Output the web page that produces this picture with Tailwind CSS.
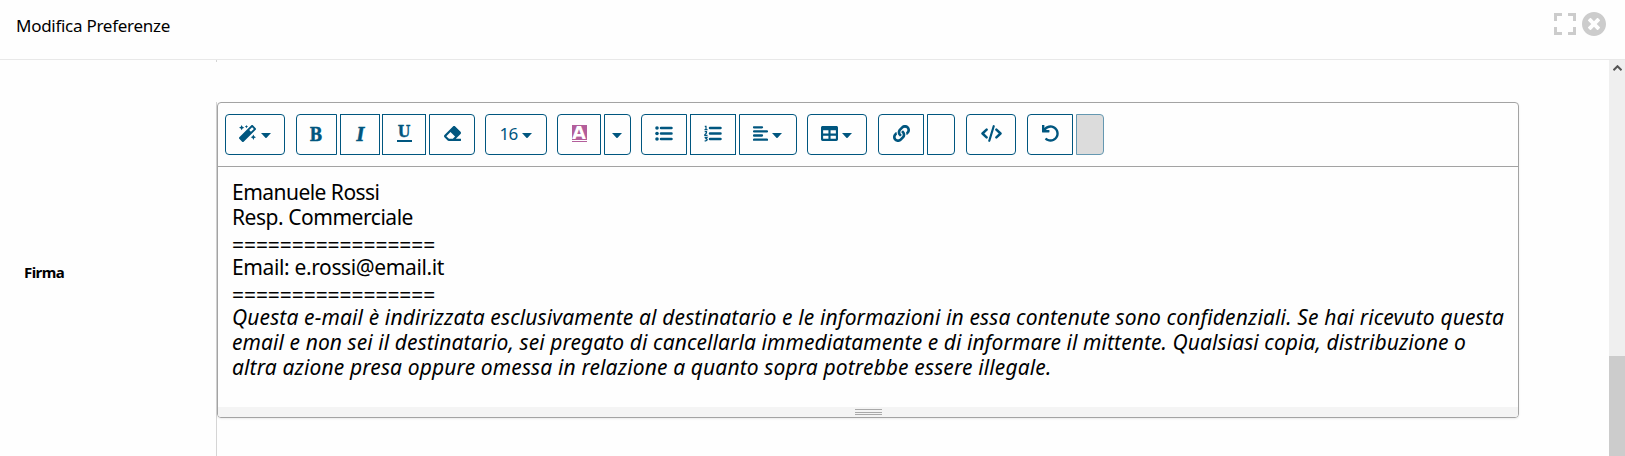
<!DOCTYPE html>
<html lang="it">
<head>
<meta charset="utf-8">
<title>Modifica Preferenze</title>
<script src="https://cdn.jsdelivr.net/npm/@tailwindcss/browser@4"></script>
</head>
<body class="flex h-[456px] w-[1625px] flex-col overflow-hidden bg-[#fefefe] font-['Noto_Sans',sans-serif] text-black">
<svg class="hidden"><symbol id="caret" viewBox="0 0 10 5"><path d="M0 0h10L5.600 4.700Q5 5.200 4.400 4.700Z" fill="currentColor"/></symbol></svg>
<header class="flex h-[60px] shrink-0 justify-between border-b border-[#e8e8e8]">
  <h1 class="pt-[14px] pl-4 text-[17px] leading-6 tracking-[-0.276px] whitespace-nowrap">Modifica Preferenze</h1>
  <div class="flex gap-[6px] pt-3 pr-[19px] text-[#ccc]">
    <svg class="mt-px h-[22px] w-[22px]" viewBox="0 0 22 22" fill="none" stroke="currentColor" stroke-width="3"><path d="M1.500 8V1.500H8M14 1.500h6.500V8M1.500 14v6.500H8M14 20.500h6.500V14"/></svg>
    <svg class="h-6 w-6" viewBox="8 8 496 496" fill="currentColor"><path d="M256 8C119 8 8 119 8 256s111 248 248 248 248-111 248-248S393 8 256 8zm121.600 313.100c4.700 4.700 4.700 12.300 0 17L338 377.600c-4.700 4.700-12.300 4.700-17 0L256 312l-65.100 65.600c-4.700 4.700-12.300 4.700-17 0L134.400 338c-4.700-4.700-4.700-12.300 0-17l65.600-65-65.600-65.100c-4.700-4.700-4.700-12.300 0-17l39.600-39.600c4.700-4.700 12.300-4.700 17 0l65 65.700 65.100-65.600c4.700-4.700 12.300-4.700 17 0l39.600 39.600c4.700 4.700 4.700 12.300 0 17L312 256l65.600 65.100z"/></svg>
  </div>
</header>
<div class="flex min-h-0 flex-1">
  <main class="flex flex-1 flex-col">
    <div class="ml-[216px] h-[2px] w-px bg-[#d5d5d5]"></div>
    <div class="mt-10 flex flex-1">
      <div class="w-[216px] shrink-0 pt-[158px] pl-6 text-[15px] leading-6 font-bold tracking-[-0.6px]">Firma</div>
      <div class="flex-1 border-l border-[#d5d5d5]">
        <section class="flex h-[316px] w-[1302px] flex-col overflow-hidden rounded-[4px] border border-[#a3a3a3] shadow-[0_1px_2px_rgba(0,0,0,0.08)]">
          <div class="flex h-16 shrink-0 border-b border-[#a3a3a3] pt-[11px] pl-[7px] text-[#00567f] *:flex *:h-[41px] *:shrink-0 *:items-center *:justify-center *:border *:border-[#00567f]">
            <button class="w-[60px] gap-[5px] rounded-[4px]"><svg class="-mt-[2px] h-[17px] w-[17px]" viewBox="0 0 512 512" fill="currentColor"><path d="M224 96l16-32 32-16-32-16-16-32-16 32-32 16 32 16 16 32zM80 160l26.660-53.330L160 80l-53.340-26.670L80 0 53.340 53.330 0 80l53.340 26.670L80 160zm352 128l-26.660 53.330L352 368l53.340 26.670L432 448l26.660-53.330L512 368l-53.340-26.670L432 288zm70.620-193.770L417.770 9.380C411.530 3.120 403.340 0 395.150 0c-8.190 0-16.380 3.120-22.630 9.380L9.380 372.520c-12.500 12.500-12.500 32.760 0 45.250l84.850 84.850c6.250 6.250 14.440 9.370 22.620 9.370 8.190 0 16.380-3.120 22.630-9.370l363.140-363.150c12.500-12.480 12.500-32.750 0-45.240zM359.450 203.460l-50.910-50.910 86.600-86.600 50.910 50.910-86.600 86.600z"/></svg><svg class="mt-px h-[5px] w-[10px]"><use href="#caret"/></svg></button>
            <button class="ml-[11px] w-[41px] rounded-l-[4px]"><span class="-mt-px inline-block scale-x-[0.8] font-['DejaVu_Serif',serif] text-[19px] leading-5 font-bold [-webkit-text-stroke:0.5px_#00567f]">B</span></button>
            <button class="ml-[3px] w-10"><span class="-mt-px inline-block scale-x-[0.9] font-['DejaVu_Serif',serif] text-[19px] leading-5 font-bold italic [-webkit-text-stroke:0.4px_#00567f]">I</span></button>
            <button class="ml-[2px] w-11"><span class="-mt-[2px] flex h-[17px] w-[15px] flex-col items-center border-b-2 border-[#00567f]"><span class="inline-block scale-x-[0.9] font-['DejaVu_Serif',serif] text-[16px] leading-[14px] font-bold [-webkit-text-stroke:0.4px_#00567f]">U</span></span></button>
            <button class="ml-[3px] w-[46px] rounded-r-[4px]"><svg class="-mt-[3px] h-[17px] w-[17px]" viewBox="0 0 512 512" fill="currentColor"><path d="M497.941 273.941c18.745-18.745 18.745-49.137 0-67.882l-160-160c-18.745-18.745-49.136-18.746-67.883 0l-256 256c-18.745 18.745-18.745 49.137 0 67.882l96 96A48.004 48.004 0 0 0 144 480h356c6.627 0 12-5.373 12-12v-40c0-6.627-5.373-12-12-12H355.883l142.058-142.059zm-302.627-62.627l137.373 137.373L265.373 416H150.628l-80-80 124.686-124.686z"/></svg></button>
            <button class="ml-[10px] w-[62px] gap-[5px] rounded-[4px] text-[17px] leading-5"><span class="-mt-px -mr-px -ml-px tracking-[-0.7px]">16</span><svg class="mt-px h-[5px] w-[10px]"><use href="#caret"/></svg></button>
            <button class="ml-[10px] w-11 rounded-l-[4px]"><span class="-mt-[2px] flex h-[17px] w-[15px] flex-col justify-between"><span class="flex h-[15px] justify-center bg-[#b35e9b] font-['DejaVu_Sans',sans-serif] text-[18px] leading-[15px] font-bold text-white"><span class="inline-block">A</span></span><i class="h-px bg-[#b35e9b]"></i></span></button>
            <button class="ml-[3px] w-[27px] rounded-r-[4px]"><svg class="mt-px -ml-px h-[5px] w-[10px]"><use href="#caret"/></svg></button>
            <button class="ml-[10px] w-[46px] rounded-l-[4px]"><svg class="-mt-[2px] h-[15px] w-[18px]" viewBox="0 0 18 15" stroke="currentColor" stroke-width="2.500" stroke-linecap="round" fill="currentColor"><path d="M6 2h10.500M6 7.500h10.500M6 13h10.500"/><g stroke="none"><circle cx="2" cy="2" r="1.800"/><circle cx="2" cy="7.500" r="1.800"/><circle cx="2" cy="13" r="1.800"/></g></svg></button>
            <button class="ml-[3px] w-[46px]"><svg class="-mt-[2px] h-[17px] w-[18px]" viewBox="0 0 18 17" fill="none" stroke="currentColor"><path stroke-width="2.500" stroke-linecap="round" d="M6 3h10.500M6 8.500h10.500M6 14h10.500"/><path stroke-width="1.200" d="M.8 1.300H2v3.400M.5 4.700h3M.7 6.600h1.800v1.300L.8 9.700v.7h2.700M.6 12.300h2.500l-1.200 1.300q1.600.1 1.200 1.500-.6 1.200-2.500.6"/></svg></button>
            <button class="ml-[3px] w-[58px] gap-1 rounded-r-[4px]"><svg class="-mt-[2px] -ml-px h-[15px] w-[15px]" viewBox="0 0 15 15" stroke="currentColor" stroke-width="2.300" stroke-linecap="round"><path d="M1 1.300h8M1 5.400h13M1 9.500h8M1 13.700h13"/></svg><svg class="mt-[2px] h-[5px] w-[10px]"><use href="#caret"/></svg></button>
            <button class="ml-[10px] w-[60px] gap-1 rounded-[4px]"><svg class="-mt-[3px] -ml-px h-[17px] w-[17px]" viewBox="0 0 512 512" fill="currentColor"><path d="M464 32H48C21.490 32 0 53.490 0 80v352c0 26.510 21.490 48 48 48h416c26.510 0 48-21.490 48-48V80c0-26.510-21.490-48-48-48zM224 416H64v-96h160v96zm0-160H64v-96h160v96zm224 160H288v-96h160v96zm0-160H288v-96h160v96z"/></svg><svg class="mt-[2px] h-[5px] w-[10px]"><use href="#caret"/></svg></button>
            <button class="ml-[11px] w-[46px] rounded-l-[4px]"><svg class="-mt-[3px] h-[17px] w-[17px]" viewBox="0 0 512 512" fill="currentColor"><path d="M326.612 185.391c59.747 59.809 58.927 155.698.36 214.590-.11.12-.24.25-.36.37l-67.200 67.200c-59.270 59.270-155.699 59.262-214.960 0-59.270-59.260-59.270-155.700 0-214.960l37.106-37.106c9.840-9.840 26.786-3.300 27.294 10.606.648 17.722 3.826 35.527 9.690 52.721 1.986 5.822.567 12.262-3.783 16.612l-13.087 13.087c-28.026 28.026-28.905 73.660-1.155 101.960 28.024 28.579 74.086 28.749 102.325.51l67.200-67.190c28.191-28.191 28.073-73.757 0-101.830-3.701-3.694-7.429-6.564-10.341-8.569a16.037 16.037 0 0 1-6.947-12.606c-.396-10.567 3.348-21.456 11.698-29.806l21.054-21.055c5.521-5.521 14.182-6.199 20.584-1.731a152.482 152.482 0 0 1 20.522 17.197zM467.547 44.449c-59.261-59.262-155.690-59.270-214.960 0l-67.200 67.200c-.12.12-.25.25-.36.37-58.566 58.892-59.387 154.781.36 214.590a152.454 152.454 0 0 0 20.521 17.196c6.402 4.468 15.064 3.789 20.584-1.731l21.054-21.055c8.350-8.350 12.094-19.239 11.698-29.806a16.037 16.037 0 0 0-6.947-12.606c-2.912-2.005-6.640-4.875-10.341-8.569-28.073-28.073-28.191-73.639 0-101.830l67.200-67.190c28.239-28.239 74.300-28.069 102.325.51 27.750 28.300 26.872 73.934-1.155 101.960l-13.087 13.087c-4.350 4.350-5.769 10.790-3.783 16.612 5.864 17.194 9.042 34.999 9.690 52.721.509 13.906 17.454 20.446 27.294 10.606l37.106-37.106c59.271-59.259 59.271-155.699.001-214.959z"/></svg></button>
            <button class="ml-[3px] w-7 rounded-r-[4px]"></button>
            <button class="ml-[11px] w-[50px] rounded-[4px]"><svg class="-mt-[3px] h-[17px] w-[21px]" viewBox="0 0 21 17" fill="none" stroke="currentColor" stroke-width="2.500" stroke-linejoin="round" stroke-linecap="round"><path d="M5.600 4.700 1.500 8.500l4.100 3.800M15.400 4.700l4.100 3.800-4.100 3.800"/><path stroke-width="2.200" d="M12.700 1.200 8.300 15.800"/></svg></button>
            <button class="ml-[11px] w-[46px] rounded-l-[4px]"><svg class="-mt-[3px] h-[17px] w-[17px]" viewBox="0 0 512 512" fill="currentColor"><path d="M212.333 224.333H12c-6.627 0-12-5.373-12-12V12C0 5.373 5.373 0 12 0h48c6.627 0 12 5.373 12 12v78.112C117.773 39.279 184.260 7.470 258.175 8.007c136.906.994 246.448 111.623 246.157 248.532C504.041 393.258 393.120 504 256.333 504c-64.089 0-122.496-24.313-166.510-64.215-5.099-4.622-5.334-12.554-.467-17.420l33.967-33.967c4.474-4.474 11.662-4.717 16.401-.525C170.760 415.336 211.580 432 256.333 432c97.268 0 176-78.716 176-176 0-97.267-78.716-176-176-176-58.496 0-110.280 28.476-142.274 72.333h98.274c6.627 0 12 5.373 12 12v48c0 6.627-5.373 12-12 12z"/></svg></button>
            <button class="ml-[3px] w-7 rounded-r-[4px] bg-[#c7c7c7] opacity-60"></button>
          </div>
          <div class="flex-1 pt-[13px] pl-[14px] text-[21px] leading-[25px] whitespace-nowrap *:h-[25px]">
            <p class="tracking-[-0.53px]">Emanuele Rossi</p>
            <p class="tracking-[-0.462px]">Resp. Commerciale</p>
            <p class="pt-[3px] tracking-[-0.06px]">=================</p>
            <p class="tracking-[-0.37px]">Email: e.rossi@email.it</p>
            <p class="pt-[3px] tracking-[-0.06px]">=================</p>
            <p class="tracking-[0.129px] italic">Questa e-mail è indirizzata esclusivamente al destinatario e le informazioni in essa contenute sono confidenziali. Se hai ricevuto questa</p>
            <p class="tracking-[0.08px] italic">email e non sei il destinatario, sei pregato di cancellarla immediatamente e di informare il mittente. Qualsiasi copia, distribuzione o</p>
            <p class="tracking-[0.13px] italic">altra azione presa oppure omessa in relazione a quanto sopra potrebbe essere illegale.</p>
          </div>
          <div class="flex h-[10px] shrink-0 flex-col items-center bg-[#f4f4f4] pt-[2px]"><div class="flex w-[27px] flex-col"><i class="h-px bg-[#a9a9a9]"></i><i class="mt-[2px] h-px bg-[#a9a9a9]"></i><i class="mt-px h-px bg-[#a9a9a9]"></i></div></div>
        </section>
      </div>
    </div>
  </main>
  <aside class="flex w-4 flex-col items-center bg-[#efefef]"><svg class="mt-[5px] h-[6px] w-[9px]" viewBox="0 0 9 6" fill="none" stroke="#555" stroke-width="2"><path d="M.5 5.200 4.500 1.200l4 4"/></svg><div class="mt-auto h-[100px] w-4 bg-[#ccc]"></div></aside>
</div>
</body>
</html>
